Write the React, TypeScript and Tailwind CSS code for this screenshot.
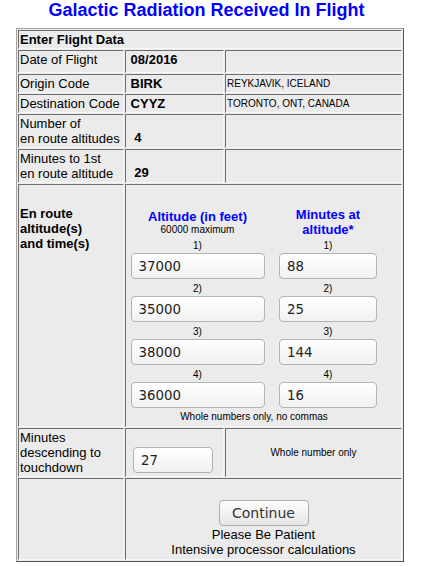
const CELL =
  "border border-t-[#6e6e6e] border-l-[#6e6e6e] border-r-[#f7f7f7] border-b-[#f7f7f7]";

const INPUT =
  "h-[26px] rounded-[4px] border border-[#b4b4b4] bg-linear-to-b from-white to-[#f1f1f1] px-[7px] font-['DejaVu_Sans',sans-serif] text-[13.33px] text-[#222] outline-none";

const ALTITUDES = [
  { n: "1)", alt: "37000", min: "88" },
  { n: "2)", alt: "35000", min: "25" },
  { n: "3)", alt: "38000", min: "144" },
  { n: "4)", alt: "36000", min: "16" },
];

function Label({ children }: { children: React.ReactNode }) {
  return <div className={`${CELL} px-px py-px text-[13px] leading-[15px]`}>{children}</div>;
}

export default function App() {
  return (
    <div className="h-[567px] w-[427px] bg-white font-['Liberation_Sans',Arial,sans-serif] text-black">
      {/* Title */}
      <div className="h-[28px] w-[413px] text-center text-[18px] font-bold leading-[21px] text-[#0000ff]">
        Galactic Radiation Received In Flight
      </div>

      {/* Form table */}
      <div className="ml-[16px] h-[534px] w-[388px] border border-t-[#a4a4a4] border-l-[#a4a4a4] border-r-[#555] border-b-[#555] bg-[#ebebeb] p-px">
        <div className="grid grid-cols-[106px_99px_177px] grid-rows-[19px_23px_19px_19px_34px_34px_243px_49px_82px] gap-px">
          <div className={`${CELL} col-span-3 px-px py-px text-[13px] font-bold leading-[15px]`}>
            Enter Flight Data
          </div>

          <Label>Date of Flight</Label>
          <div className={`${CELL} px-px py-px text-[13px] font-bold leading-[15px]`}>{"\u00a008/2016"}</div>
          <div className={CELL} />

          <Label>Origin Code</Label>
          <div className={`${CELL} px-px py-px text-[13px] font-bold leading-[15px]`}>{"\u00a0BIRK"}</div>
          <div className={`${CELL} px-px py-px text-[10px] leading-normal`}>REYKJAVIK, ICELAND</div>

          <Label>Destination Code</Label>
          <div className={`${CELL} px-px py-px text-[13px] font-bold leading-[15px]`}>{"\u00a0CYYZ"}</div>
          <div className={`${CELL} px-px py-px text-[10px] leading-normal`}>TORONTO, ONT, CANADA</div>

          <Label>
            Number of
            <br />
            en route altitudes
          </Label>
          <div className={`${CELL} flex items-end px-px pb-[2px] text-[13px] font-bold leading-[15px]`}>
            {"\u00a0\u00a04"}
          </div>
          <div className={CELL} />

          <Label>
            Minutes to 1st
            <br />
            en route altitude
          </Label>
          <div className={`${CELL} flex items-end px-px pb-[2px] text-[13px] font-bold leading-[15px]`}>
            {"\u00a0\u00a029"}
          </div>
          <div className={CELL} />

          {/* En route altitudes */}
          <div className={`${CELL} px-px pt-[21px] text-[13px] font-bold leading-[15px]`}>
            En route
            <br />
            altitude(s)
            <br />
            and time(s)
          </div>
          <div className={`${CELL} col-span-2 pt-[22px]`}>
            <div className="grid grid-cols-[143px_118px]">
              <div className="flex h-[30px] flex-col items-center justify-center text-center">
                <div className="text-[13px] font-bold leading-[15px] text-[#0000ff]">Altitude (in feet)</div>
                <div className="text-[10px] leading-[11.5px]">60000 maximum</div>
              </div>
              <div className="flex h-[30px] flex-col items-center justify-center text-center text-[13px] font-bold leading-[15px] text-[#0000ff]">
                <div>Minutes at</div>
                <div>altitude*</div>
              </div>
              {ALTITUDES.map((a, i) => (
                <div key={a.n} className={`contents`}>
                  <div className={`flex flex-col items-center ${i === 0 ? "mt-[2px]" : "mt-[3px]"}`}>
                    <div className="h-[14px] text-[10px] leading-[14px]">{a.n}</div>
                    <input readOnly value={a.alt} className={`${INPUT} w-[134px]`} />
                  </div>
                  <div className={`flex flex-col items-center ${i === 0 ? "mt-[2px]" : "mt-[3px]"}`}>
                    <div className="h-[14px] text-[10px] leading-[14px]">{a.n}</div>
                    <input readOnly value={a.min} className={`${INPUT} w-[98px]`} />
                  </div>
                </div>
              ))}
            </div>
            <div className="mt-[3px] w-[256px] text-center text-[10px] leading-[12px]">
              Whole numbers only, no commas
            </div>
          </div>

          {/* Descent */}
          <Label>
            Minutes
            <br />
            descending to
            <br />
            touchdown
          </Label>
          <div className={`${CELL} flex items-end pb-[3px] pl-[7px]`}>
            <input readOnly value="27" className={`${INPUT} w-[80px]`} />
          </div>
          <div className={`${CELL} flex items-center justify-center text-[10px] leading-normal`}>
            Whole number only
          </div>

          {/* Submit */}
          <div className={CELL} />
          <div className={`${CELL} col-span-2 flex flex-col items-center justify-end pb-[2px] text-[13px] leading-[15px]`}>
            <button
              type="button"
              className="mb-px h-[26px] w-[90px] rounded-[4px] border border-[#adadad] bg-linear-to-b from-[#fdfdfd] to-[#e6e6e6] font-['DejaVu_Sans',sans-serif] text-[14px] text-[#333]"
            >
              Continue
            </button>
            <div>Please Be Patient</div>
            <div>Intensive processor calculations</div>
          </div>
        </div>
      </div>
    </div>
  );
}
